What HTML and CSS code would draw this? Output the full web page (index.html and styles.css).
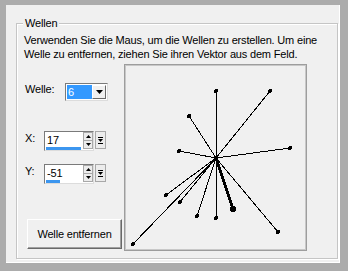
FILE: index.html
```html
<!DOCTYPE html>
<html lang="de">
<head>
    <meta charset="UTF-8">
    <title>Wellen</title>
    <link rel="stylesheet" href="styles.css">
</head>
<body>
    <div class="window">
        <div class="group">
            <span class="legend">Wellen</span>
            <p class="hint">Verwenden Sie die Maus, um die Wellen zu erstellen. Um eine<br>Welle zu entfernen, ziehen Sie ihren Vektor aus dem Feld.</p>
            <div class="main">
                <div class="controls">
                    <div class="row row-welle">
                        <label class="lbl lbl-long">Welle:</label>
                        <div class="select">
                            <span class="sel-value">6</span>
                            <span class="sel-btn">
                                <svg width="7" height="4" viewBox="0 0 7 4"><path d="M0 0h7L3.5 4z" fill="#000"/></svg>
                            </span>
                        </div>
                    </div>
                    <div class="row row-x">
                        <label class="lbl lbl-short">X:</label>
                        <div class="spin">
                            <div class="spin-field">
                                <span class="spin-value">17</span>
                                <span class="spin-bar bar-x"></span>
                            </div>
                            <div class="spin-arrows">
                                <span class="arrow"><svg width="5" height="3" viewBox="0 0 5 3"><path d="M2.5 0L5 3H0z" fill="#000"/></svg></span>
                                <span class="arrow"><svg width="5" height="3" viewBox="0 0 5 3"><path d="M0 0h5L2.5 3z" fill="#000"/></svg></span>
                            </div>
                        </div>
                        <span class="end-btn">
                            <svg width="5" height="7" viewBox="0 0 5 7"><path d="M0 0.5h5M0 6.5h5" stroke="#000"/><path d="M0 2h5L2.5 5z" fill="#000"/></svg>
                        </span>
                    </div>
                    <div class="row row-y">
                        <label class="lbl lbl-short">Y:</label>
                        <div class="spin">
                            <div class="spin-field">
                                <span class="spin-value">-51</span>
                                <span class="spin-bar bar-y"></span>
                            </div>
                            <div class="spin-arrows">
                                <span class="arrow"><svg width="5" height="3" viewBox="0 0 5 3"><path d="M2.5 0L5 3H0z" fill="#000"/></svg></span>
                                <span class="arrow"><svg width="5" height="3" viewBox="0 0 5 3"><path d="M0 0h5L2.5 3z" fill="#000"/></svg></span>
                            </div>
                        </div>
                        <span class="end-btn">
                            <svg width="5" height="7" viewBox="0 0 5 7"><path d="M0 0.5h5M0 6.5h5" stroke="#000"/><path d="M0 2h5L2.5 5z" fill="#000"/></svg>
                        </span>
                    </div>
                    <button class="remove">Welle entfernen</button>
                </div>
                <div class="canvas">
                    <svg width="181" height="185" viewBox="125 65 181 185" shape-rendering="crispEdges">
                        <g stroke="#000" stroke-width="1">
                            <line x1="216" y1="158" x2="216" y2="91"/>
                            <line x1="216" y1="158" x2="270" y2="91"/>
                            <line x1="216" y1="158" x2="189" y2="116"/>
                            <line x1="216" y1="158" x2="179" y2="151"/>
                            <line x1="216" y1="158" x2="290" y2="148"/>
                            <line x1="216" y1="158" x2="166" y2="195"/>
                            <line x1="216" y1="158" x2="180" y2="202"/>
                            <line x1="216" y1="158" x2="197" y2="216"/>
                            <line x1="216" y1="158" x2="216" y2="218"/>
                            <line x1="216" y1="158" x2="278" y2="232"/>
                            <line x1="216" y1="158" x2="133" y2="244"/>
                            <line x1="216" y1="158" x2="233" y2="209" stroke-width="3"/>
                        </g>
                        <g fill="#000">
                            <circle cx="216" cy="91" r="2"/>
                            <circle cx="270" cy="91" r="2"/>
                            <circle cx="189" cy="116" r="2"/>
                            <circle cx="179" cy="151" r="2"/>
                            <circle cx="290" cy="148" r="2"/>
                            <circle cx="166" cy="195" r="2"/>
                            <circle cx="180" cy="202" r="2"/>
                            <circle cx="197" cy="216" r="2"/>
                            <circle cx="216" cy="218" r="2"/>
                            <circle cx="278" cy="232" r="2"/>
                            <circle cx="133" cy="244" r="2"/>
                            <circle cx="216" cy="158" r="2"/>
                            <circle cx="233" cy="209" r="3.2"/>
                        </g>
                    </svg>
                </div>
            </div>
        </div>
    </div>
</body>
</html>
```

FILE: styles.css
```css
body {
    margin: 0;
    background: #acacac;
    font-family: "Liberation Sans", Arial, sans-serif;
    font-size: 11px;
    letter-spacing: -0.18px;
    color: #000;
}
.window {
    box-sizing: border-box;
    width: 334px;
    height: 258px;
    margin: 5px 8px 8px 6px;
    padding: 18px 3px 0 10px;
    background: #f0f0f0;
    border-right: 1px solid #fff;
    border-bottom: 1px solid #fff;
}
.group {
    position: relative;
    box-sizing: border-box;
    width: 322px;
    height: 236px;
    padding: 9px 30px 7px 7px;
    border: 1px solid #c5c5c5;
    box-shadow: inset 1px 1px 0 #fff, 1px 1px 0 #fff;
}
.legend {
    position: absolute;
    top: -8px;
    left: 6px;
    padding: 0 2px;
    line-height: 14px;
    background: #f0f0f0;
}
.hint {
    margin: 0;
    line-height: 14px;
    white-space: nowrap;
}
.main {
    display: flex;
    margin-top: 3px;
}
.controls {
    width: 100px;
    display: flex;
    flex-direction: column;
}
.row {
    display: flex;
    align-items: flex-start;
    padding-left: 1px;
}
.lbl {
    line-height: 14px;
}
.lbl-long {
    width: 40px;
    margin-top: -1px;
}
.lbl-short {
    width: 19px;
}
.row-welle {
    margin-top: 19px;
}
.row-x {
    margin-top: 30px;
}
.row-y {
    margin-top: 13px;
}
.select {
    display: flex;
    box-sizing: border-box;
    width: 43px;
    height: 18px;
    border: 1px solid #7a7a7a;
    border-right-color: #dcdcdc;
    border-bottom-color: #dcdcdc;
    background: #fff;
    padding: 1px;
}
.sel-value {
    width: 24px;
    background: #3399ff;
    color: #fff;
    line-height: 14px;
    padding-left: 1px;
}
.sel-btn {
    flex: 1;
    display: flex;
    align-items: center;
    justify-content: center;
    background: #f0f0f0;
    border: 1px solid #fff;
    border-right-color: #696969;
    border-bottom-color: #696969;
}
.spin {
    display: flex;
    box-sizing: border-box;
    width: 50px;
    height: 20px;
    border: 1px solid #7a7a7a;
    border-right-color: #dcdcdc;
    border-bottom-color: #dcdcdc;
    background: #fff;
}
.spin-field {
    flex: 1;
    display: flex;
    flex-direction: column;
    padding: 1px 0 0 2px;
}
.spin-value {
    line-height: 14px;
}
.spin-bar {
    height: 3px;
    background: #3c96ef;
    margin-left: -1px;
}
.bar-x {
    width: 35px;
}
.bar-y {
    width: 14px;
}
.spin-arrows {
    width: 10px;
    display: flex;
    flex-direction: column;
    margin-bottom: 1px;
}
.arrow {
    flex: 1;
    display: flex;
    align-items: center;
    justify-content: center;
    background: #ececec;
    border: 1px solid #a8a8a8;
}
.arrow + .arrow {
    border-top: none;
}
.end-btn {
    display: flex;
    align-items: center;
    justify-content: center;
    box-sizing: border-box;
    width: 11px;
    height: 18px;
    margin-left: 1px;
    background: #ececec;
    border: 1px solid #a8a8a8;
}
.remove {
    box-sizing: border-box;
    width: 95px;
    height: 30px;
    margin: 35px 0 0 3px;
    padding: 0;
    font-family: inherit;
    font-size: 11px;
    letter-spacing: -0.18px;
    color: #000;
    background: #f0f0f0;
    border: 1px solid #fff;
    border-right-color: #696969;
    border-bottom-color: #696969;
    box-shadow: inset -1px -1px 0 #a0a0a0;
}
.canvas {
    box-sizing: border-box;
    width: 183px;
    height: 187px;
    background: #f0f0f0;
    border: 1px solid #9d9d9d;
    box-shadow: inset 0 0 0 1px #c8c8c8;
}
.canvas svg {
    display: block;
}
```
